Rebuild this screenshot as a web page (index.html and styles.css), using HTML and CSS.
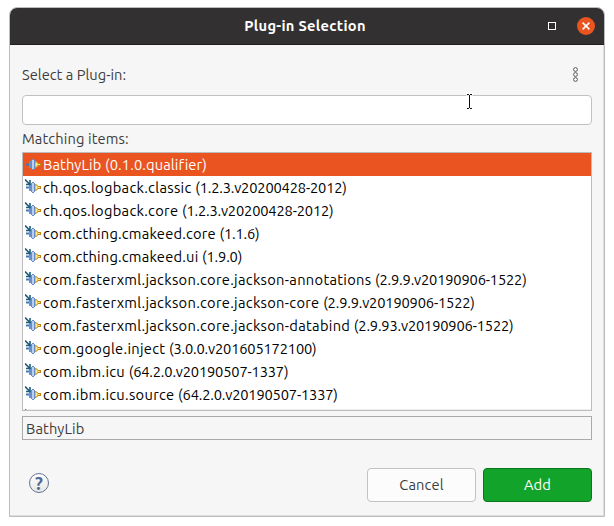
FILE: index.html
```html
<!DOCTYPE html>
<html lang="en">
<head>
<meta charset="utf-8">
<title>Plug-in Selection</title>
<link rel="stylesheet" href="styles.css">
</head>
<body>
<svg class="defs" width="0" height="0" aria-hidden="true">
  <symbol id="plug" viewBox="0 0 16 16">
    <path d="M1 7.5h3v2H1z" fill="#4478b5"/>
    <path d="M4 5h2v7H4z" fill="#6790cd"/>
    <path d="M6 4h1V3h2v1h1v9H9v1H7v-1H6z" fill="#668dc8"/>
    <path d="M7 4h2v9H7z" fill="#bbd0f1"/>
    <path d="M10 5h1l2 1.5v4L11 12h-1z" fill="#d19b20"/>
    <path d="M10.5 6.5h1l1 1v2l-1 1h-1z" fill="#ffe793"/>
    <path d="M13 7h3v3h-3z" fill="#bd8614"/>
    <path d="M13 8h2v1h-2z" fill="#ffe67b"/>
  </symbol>
  <symbol id="arrow" viewBox="0 0 16 16">
    <path d="M0 .5 4.5 5M5 1v4.5H1" fill="none" stroke="#1f5d7c" stroke-width="1.6"/>
  </symbol>
</svg>
<main class="window">
  <header class="titlebar">
    <h1 class="title">Plug-in Selection</h1>
    <div class="controls">
      <span class="maximize"></span>
      <svg class="close" viewBox="0 0 18 18"><circle cx="9" cy="9" r="9" fill="#e95420"/><path d="m5.6 5.6 6.8 6.8m0-6.8-6.8 6.8" stroke="#fff" stroke-width="1.5"/></svg>
    </div>
  </header>
  <div class="content">
    <div class="heading">
      <span class="select-label">Select a Plug-in:</span>
      <svg class="menu" viewBox="0 0 7 16"><g fill="#fff" stroke="#555"><circle cx="3.5" cy="2.5" r="1.9"/><circle cx="3.5" cy="7.5" r="1.9"/><circle cx="3.5" cy="12.5" r="1.9"/></g></svg>
    </div>
    <div class="search"></div>
    <div class="matching">Matching items:</div>
    <ul class="list">
      <li class="row selected"><svg class="icon"><use href="#plug"/></svg><span>BathyLib (0.1.0.qualifier)</span></li>
      <li class="row"><svg class="icon"><use href="#plug"/><use href="#arrow"/></svg><span class="name">ch.qos.logback.classic <span class="version">(1.2.3.v20200428-2012)</span></span></li>
      <li class="row"><svg class="icon"><use href="#plug"/><use href="#arrow"/></svg><span class="name">ch.qos.logback.core <span class="version">(1.2.3.v20200428-2012)</span></span></li>
      <li class="row"><svg class="icon"><use href="#plug"/><use href="#arrow"/></svg><span class="name short">com.cthing.cmakeed.core <span class="version">(1.1.6)</span></span></li>
      <li class="row"><svg class="icon"><use href="#plug"/><use href="#arrow"/></svg><span class="name short">com.cthing.cmakeed.ui <span class="version">(1.9.0)</span></span></li>
      <li class="row"><svg class="icon"><use href="#plug"/><use href="#arrow"/></svg><span class="name">com.fasterxml.jackson.core.jackson-annotations <span class="version">(2.9.9.v20190906-1522)</span></span></li>
      <li class="row"><svg class="icon"><use href="#plug"/><use href="#arrow"/></svg><span class="name">com.fasterxml.jackson.core.jackson-core <span class="version">(2.9.9.v20190906-1522)</span></span></li>
      <li class="row"><svg class="icon"><use href="#plug"/><use href="#arrow"/></svg><span class="name">com.fasterxml.jackson.core.jackson-databind <span class="version">(2.9.93.v20190906-1522)</span></span></li>
      <li class="row"><svg class="icon"><use href="#plug"/><use href="#arrow"/></svg><span class="name">com.google.inject <span class="version">(3.0.0.v201605172100)</span></span></li>
      <li class="row"><svg class="icon"><use href="#plug"/><use href="#arrow"/></svg><span class="name">com.ibm.icu <span class="version">(64.2.0.v20190507-1337)</span></span></li>
      <li class="row"><svg class="icon"><use href="#plug"/><use href="#arrow"/></svg><span class="name">com.ibm.icu.source <span class="version">(64.2.0.v20190507-1337)</span></span></li>
      <li class="row"><svg class="icon"><use href="#arrow"/></svg></li>
    </ul>
    <div class="status">BathyLib</div>
    <footer class="footer">
      <div class="help">?</div>
      <div class="button">Cancel</div>
      <div class="button primary">Add</div>
    </footer>
  </div>
</main>
<svg class="pointer" viewBox="0 0 9 19"><path d="M1 2h2.5l1 1 1-1H8M4.5 3v13M1 17h2.5l1-1 1 1H8" fill="none" stroke="#fff" stroke-width="3"/><path d="M2 2.5h2M5 2.5h2M4.5 3v13M2 16.5h2M5 16.5h2" fill="none" stroke="#111"/></svg>
</body>
</html>
```

FILE: styles.css
```css
* { box-sizing: border-box; }
body {
  margin: 0;
  width: 614px;
  height: 526px;
  padding: 7px 0 0 9px;
  overflow: hidden;
  background: #fff;
  color: #3d3d3d;
  font: 14.667px/22px Ubuntu, "Noto Sans", sans-serif;
  letter-spacing: .12px;
}
.defs { position: absolute; }
.window {
  width: 596px;
  height: 510px;
  border: 1px solid #bcbcbc;
  border-radius: 8px 8px 0 0;
  background: #f6f6f6;
  box-shadow: inset -1px -1px #dedede;
  overflow: hidden;
}
.titlebar {
  display: grid;
  grid-template-columns: 1fr auto 1fr;
  align-items: center;
  height: 37px;
  background: #333031;
  border-bottom: 1px solid #1f1d1e;
}
.title {
  grid-column: 2;
  margin: 0;
  padding-right: 4px;
  color: #fff;
  font-size: 14.667px;
  font-weight: 700;
  line-height: 22px;
  letter-spacing: .3px;
}
.controls {
  display: flex;
  justify-content: flex-end;
  align-items: center;
  gap: 21px;
  padding-right: 9px;
}
.maximize { width: 8px; height: 8px; border: 1px solid #fff; }
.close { width: 18px; height: 18px; }
.content { padding: 0 12px; }
.heading {
  display: flex;
  justify-content: space-between;
  align-items: center;
  height: 50px;
  padding: 10px 13px 0 0;
}
.select-label { letter-spacing: .02px; }
.menu { width: 7px; height: 16px; }
.search {
  height: 30px;
  border: 1px solid #c1c1c1;
  border-radius: 4px;
  background: #fff;
}
.matching { height: 27px; padding-top: 3px; }
.list {
  height: 259px;
  margin: 0;
  padding: 0;
  border: 1px solid #bdbdbd;
  background: #fff;
  box-shadow: inset 0 -1px #ededed;
  color: #000;
  list-style: none;
  overflow: hidden;
}
.row {
  display: flex;
  align-items: center;
  height: 23px;
  padding-left: 2px;
  gap: 2px;
  white-space: nowrap;
}
.name { letter-spacing: .3px; }
.short { letter-spacing: .22px; }
.version { letter-spacing: -.17px; }
.icon { width: 16px; height: 16px; flex: none; margin-top: -1px; }
.selected { background: #e95420; color: #fff; }
.status {
  height: 24px;
  margin-top: 5px;
  padding-left: 3px;
  border: 1px solid #aaa;
  line-height: 23px;
}
.footer { display: flex; align-items: center; gap: 7px; margin-top: 28px; }
.help {
  width: 20px;
  height: 20px;
  margin: -4px auto 0 7px;
  border: 1px solid #647493;
  border-radius: 50%;
  background: linear-gradient(#fff, #e7e7e7);
  color: #526b96;
  font-weight: 700;
  font-size: 18px;
  line-height: 18px;
  text-align: center;
}
.button {
  width: 109px;
  height: 34px;
  border: 1px solid #c1c1c1;
  border-radius: 4px;
  background: #fcfcfc;
  line-height: 31px;
  text-align: center;
}
.primary { border-color: #0b761b; background: #12a42a; color: #fff; }
.pointer { position: absolute; left: 465px; top: 92px; width: 9px; height: 19px; }
```
